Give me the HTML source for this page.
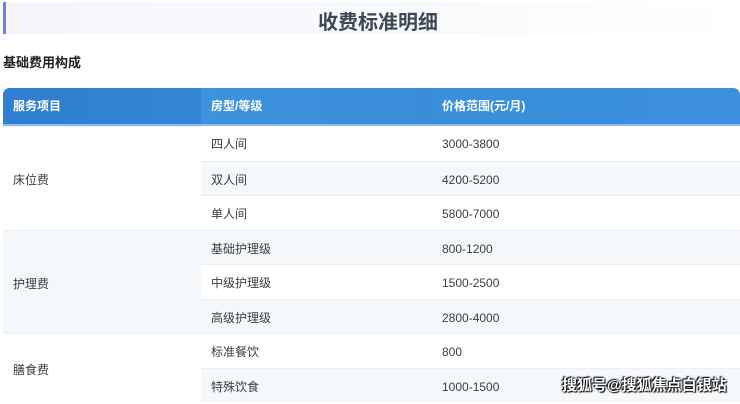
<!DOCTYPE html>
<html><head><meta charset="utf-8"><style>
*{margin:0;padding:0;box-sizing:border-box}
body{width:740px;height:400px;overflow:hidden;background:#fff;font-family:"Liberation Sans","Noto Sans CJK SC",sans-serif;position:relative}
.title{position:absolute;left:3px;top:2px;width:737px;height:32px;background:linear-gradient(90deg,#f4f6fa,#f8fafc 60%,#fff);border-left:3px solid #6f7fe3}
.title span{position:absolute;left:10px;right:0;text-align:center;top:4px;font-size:20px;font-weight:bold;color:#3c4858}
.sub{position:absolute;left:3px;top:52px;font-size:13px;font-weight:bold;color:#222}
.hdr{position:absolute;left:3px;top:88px;width:737px;height:38px;border-radius:7px 7px 0 0;background:linear-gradient(90deg,#2f80d0,#3f95de 30%,#3a8fdb 60%,#3b8fdc);overflow:hidden;border-bottom:2px solid #8cbdea}
.hdr div{position:absolute;top:0;height:36px;line-height:36px;color:#fff;font-size:12px;font-weight:bold;padding-left:10px}
.row{position:absolute;left:201px;width:539px;height:34.5px;border-top:1px solid #e9eff5}
.row span{position:absolute;top:1px;line-height:34px;font-size:12px;color:#3d3d3d}
.lt{background:#f4f8fb}
.grp{position:absolute;left:3px;width:198px;border-top:1px solid #e9eff5}
.grp span{position:absolute;left:10px;font-size:12px;color:#3d3d3d}
.wm{position:absolute;left:562px;top:374px;font-size:15px;font-weight:bold;color:#fff;text-shadow:0 0 2px #000,1px 1px 1px #000,-1px -1px 1px #000}
</style></head><body>
<div class="title"><span>收费标准明细</span></div>
<div class="sub">基础费用构成</div>
<div class="hdr">
<div style="left:0;width:198px;background:linear-gradient(90deg,#2f7ecf,#3486d4)">服务项目</div>
<div style="left:198px;width:231px;background:linear-gradient(90deg,#3d93dd,#3a8cd8)">房型/等级</div>
<div style="left:429px;width:308px">价格范围(元/月)</div>
</div>
<div class="grp" style="top:126px;height:103.5px"><span style="top:44px">床位费</span></div>
<div class="grp lt" style="top:229.5px;height:103.5px"><span style="top:44px">护理费</span></div>
<div class="grp" style="top:333px;height:69px;"><span style="top:27px">膳食费</span></div>
<div class="row" style="top:126px;border-top:none"><span style="left:10px">四人间</span><span style="left:241px">3000-3800</span></div>
<div class="row lt" style="top:160.5px"><span style="left:10px">双人间</span><span style="left:241px">4200-5200</span></div>
<div class="row" style="top:195px"><span style="left:10px">单人间</span><span style="left:241px">5800-7000</span></div>
<div class="row lt" style="top:229.5px"><span style="left:10px">基础护理级</span><span style="left:241px">800-1200</span></div>
<div class="row" style="top:264px"><span style="left:10px">中级护理级</span><span style="left:241px">1500-2500</span></div>
<div class="row lt" style="top:298.5px"><span style="left:10px">高级护理级</span><span style="left:241px">2800-4000</span></div>
<div class="row" style="top:333px"><span style="left:10px">标准餐饮</span><span style="left:241px">800</span></div>
<div class="row lt" style="top:367.5px"><span style="left:10px">特殊饮食</span><span style="left:241px">1000-1500</span></div>
<div class="wm">搜狐号@搜狐焦点白银站</div>
</body></html>
